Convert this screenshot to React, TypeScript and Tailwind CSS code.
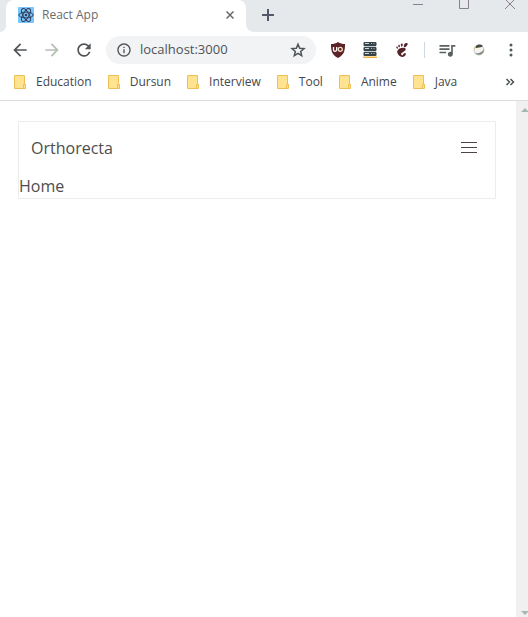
import type { ReactNode } from "react";
import { MdArrowBack, MdArrowForward, MdRefresh, MdInfoOutline, MdQueueMusic } from "react-icons/md";
import { SiGnome } from "react-icons/si";

const bookmarks = ["Education", "Dursun", "Interview", "Tool", "Anime", "Java"];

function IconButton({ label, children, className = "" }: { label: string; children: ReactNode; className?: string }) {
  return (
    <button type="button" aria-label={label} className={`flex shrink-0 items-center justify-center ${className}`}>
      {children}
    </button>
  );
}

function ReactFavicon() {
  return (
    <svg viewBox="0 0 16 16" className="size-4 shrink-0" aria-hidden="true">
      <rect width="16" height="16" rx="1" fill="#78c6fb" />
      <g fill="none" stroke="#34405c" strokeWidth="1">
        <ellipse cx="8" cy="8" rx="7.2" ry="2.9" />
        <ellipse cx="8" cy="8" rx="7.2" ry="2.9" transform="rotate(60 8 8)" />
        <ellipse cx="8" cy="8" rx="7.2" ry="2.9" transform="rotate(120 8 8)" />
      </g>
      <circle cx="8" cy="8" r="1.3" fill="#34405c" />
    </svg>
  );
}

function FolderIcon() {
  return (
    <svg viewBox="0 0 12 14" className="h-3.5 w-3 shrink-0" aria-hidden="true">
      <path d="M.5.5h10v9h1v4H.5z" fill="#ffe391" stroke="#edc057" />
      <path d="M9.5 13.5V9.5h2" fill="none" stroke="#edc057" />
    </svg>
  );
}

function ShieldIcon() {
  return (
    <svg viewBox="0 0 16 16" className="size-4" aria-hidden="true">
      <path d="M8 0c2 1.5 4.5 2 7 2 0 6.5-.5 10.5-7 14C1.5 12.5 1 8.500 1 2c2.500 0 5-.5 7-2z" fill="#5b2228" />
      <path d="M3.500 5v2.700a1.600 1.600 0 0 0 3.200 0V5" fill="none" stroke="#fff" strokeWidth="1.300" />
      <circle cx="10.300" cy="7.300" r="2" fill="none" stroke="#f7dfc0" strokeWidth="1.300" />
    </svg>
  );
}

function ServerIcon() {
  return (
    <svg viewBox="0 0 14 16" className="h-4 w-3.5" aria-hidden="true">
      <g fill="#39434b">
        <rect x="0.5" width="13" height="4" rx="1" />
        <rect x="0.5" y="5" width="13" height="4" rx="1" />
        <rect x="0.5" y="10" width="13" height="4" rx="1" />
      </g>
      <path d="M2 1.5h4M2 6.5h4M2 11.5h4" stroke="#c9dcd9" />
      <path d="M8 1.5h1M10.500 1.5h1M8 6.5h1M10.500 6.5h1M8 11.5h1M10.500 11.5h1" stroke="#9fb8c0" />
      <path d="M1 4.5h12M1 9.5h12" stroke="#c3cfce" />
      <path d="M0 15.5h14" stroke="#f2b14c" />
      <path d="M0 14.5h14" stroke="#fbdc9a" />
    </svg>
  );
}

function LeafIcon() {
  return (
    <svg viewBox="0 0 12 12" className="size-3" aria-hidden="true">
      <circle cx="6" cy="6" r="5" fill="#f3f3ef" stroke="#b9bfb8" strokeWidth="0.8" />
      <path d="M2.200 3A5 5 0 0 1 9.800 1.700C9.300 3.600 6.800 2.900 4.800 3.800 3.600 4.300 3 4.200 2.200 3z" fill="#454b45" />
      <path d="M2 8.900c3.500 1.100 7.500-.6 8.800-4.200.5 3.300-1.500 6-4.800 6-1.700 0-3.200-.6-4-1.800z" fill="#848c82" />
      <path d="M1.200 4.800 2.600 2.200" stroke="#e3ba4b" strokeWidth="1.200" />
    </svg>
  );
}

function TabStrip() {
  return (
    <header className="flex h-8 bg-[#e6e9ec]">
      <div className="flex w-1.5 bg-white">
        <div className="grow rounded-br-lg bg-[#e6e9ec]" />
      </div>
      <div className="flex w-60 items-center rounded-t-lg bg-white pr-2 pb-0.5 pl-3">
        <ReactFavicon />
        <span className="grow pl-2 text-xs text-[#6b6b6b]">React App</span>
        <IconButton label="Close tab" className="size-4">
          <svg viewBox="0 0 8 8" className="size-2" fill="none" stroke="#66696d" strokeWidth="1.5">
            <path d="M.5.5l7 7M7.500.5l-7 7" />
          </svg>
        </IconButton>
      </div>
      <div className="flex grow bg-white">
        <div className="flex grow items-start justify-between rounded-bl-lg bg-[#e6e9ec] pl-3">
          <IconButton label="New tab" className="mt-[5px] size-5">
            <svg viewBox="0 0 12 12" className="size-3" fill="none" stroke="#55586a" strokeWidth="2">
              <path d="M0 6h12M6 0v12" />
            </svg>
          </IconButton>
          <div className="flex gap-9 pr-[13px] text-[#8a7f8c]">
            <IconButton label="Minimize" className="size-2.5">
              <svg viewBox="0 0 10 10" className="size-2.5" fill="none" stroke="currentColor">
                <path d="M0 4.5h10" />
              </svg>
            </IconButton>
            <IconButton label="Maximize" className="size-2.5">
              <svg viewBox="0 0 10 10" className="size-2.5" fill="none" stroke="currentColor">
                <path d="M.5-1v9.500h9V-1" />
              </svg>
            </IconButton>
            <IconButton label="Close" className="size-2.5">
              <svg viewBox="0 0 10 10" className="size-2.5" fill="none" stroke="currentColor">
                <path d="M0-1l10 10M10-1L0 9" />
              </svg>
            </IconButton>
          </div>
        </div>
      </div>
    </header>
  );
}

function Toolbar() {
  return (
    <div className="flex h-9 items-center pr-[7px] pl-2.5">
      <div className="flex gap-3 text-[#505457]">
        <IconButton label="Back" className="size-5">
          <MdArrowBack className="size-5" />
        </IconButton>
        <IconButton label="Forward" className="size-5">
          <MdArrowForward className="size-5 text-[#b4beb2]" />
        </IconButton>
        <IconButton label="Reload" className="size-5">
          <MdRefresh className="size-5" />
        </IconButton>
      </div>
      <div className="ml-3 flex h-7 min-w-0 grow items-center rounded-full bg-[#f1f3f4] px-2.5 text-[#505457]">
        <MdInfoOutline className="size-4 shrink-0" />
        <input
          aria-label="Address"
          defaultValue="localhost:3000"
          className="ml-2 w-0 min-w-0 grow bg-transparent text-[13px] text-[#4f5256] outline-none"
        />
        <IconButton label="Bookmark this page" className="size-4">
          <svg viewBox="0 0 16 16" className="size-4" fill="none" stroke="currentColor" strokeWidth="1.5">
            <path d="M8 2.200l1.700 4 4.300.4-3.300 2.800 1 4.200L8 11.400l-3.700 2.200 1-4.200L2 6.600l4.300-.4z" />
          </svg>
        </IconButton>
      </div>
      <div className="ml-3 flex shrink-0 items-center gap-3">
        <IconButton label="Content blocker" className="size-5">
          <ShieldIcon />
        </IconButton>
        <IconButton label="Server extension" className="size-5">
          <ServerIcon />
        </IconButton>
        <IconButton label="Gnome extension" className="size-5">
          <SiGnome className="size-3.5 text-[#54242a]" />
        </IconButton>
        <span className="h-4 w-px bg-[#cfd8df]" />
        <IconButton label="Playlist" className="size-5">
          <MdQueueMusic className="size-5 text-[#59625f]" />
        </IconButton>
        <IconButton label="Profile" className="size-5">
          <LeafIcon />
        </IconButton>
        <IconButton label="Menu" className="size-5">
          <svg viewBox="0 0 4 14" className="h-3.5 w-1" fill="#4f5b59">
            <circle cx="2" cy="2" r="1.5" />
            <circle cx="2" cy="7" r="1.5" />
            <circle cx="2" cy="12" r="1.5" />
          </svg>
        </IconButton>
      </div>
    </div>
  );
}

function BookmarksBar() {
  return (
    <nav className="flex h-[33px] items-center justify-between border-b border-[#dadce0] pr-[13px] pb-1 pl-3.5 text-xs text-[#44474b]">
      <ul className="flex gap-4">
        {bookmarks.map((name) => (
          <li key={name}>
            <a href="#" className="flex items-center gap-2.5">
              <FolderIcon />
              {name}
            </a>
          </li>
        ))}
      </ul>
      <IconButton label="More bookmarks">
        <svg viewBox="0 0 10 8" className="h-2 w-2.5" fill="none" stroke="#4a5254" strokeWidth="1.5">
          <path d="M1.500 1l3 3-3 3M5.500 1l3 3-3 3" />
        </svg>
      </IconButton>
    </nav>
  );
}

function Scrollbar() {
  return (
    <div className="flex w-3 flex-col justify-between overflow-hidden bg-[#f0f0f0] pt-[7px] pb-0.5 pl-[5px]" aria-hidden="true">
      <svg viewBox="0 0 8 4" className="h-1 w-2 shrink-0" fill="#a3bab3">
        <path d="M0 4l4-4 4 4z" />
      </svg>
      <svg viewBox="0 0 8 4" className="h-1 w-2 shrink-0" fill="#a3bab3">
        <path d="M0 0l4 4 4-4z" />
      </svg>
    </div>
  );
}

export default function App() {
  return (
    <div className="flex min-h-screen flex-col bg-white font-['Open_Sans','Noto_Sans',sans-serif]">
      <TabStrip />
      <Toolbar />
      <BookmarksBar />
      <div className="flex grow">
        <main className="grow pt-5 pr-5 pl-[18px]">
          <nav className="border border-[#ececec] text-base text-[#4d4d4d]">
            <div className="flex h-[52px] items-center justify-between pr-[18px] pl-3">
              <a href="#">Orthorecta</a>
              <button type="button" aria-label="Toggle navigation" className="flex h-3 w-4 flex-col gap-1">
                <span className="h-px w-full bg-[#4d4449]" />
                <span className="h-px w-full bg-[#4d4449]" />
                <span className="h-px w-full bg-[#4d4449]" />
              </button>
            </div>
            <a href="#" className="block">Home</a>
          </nav>
        </main>
        <Scrollbar />
      </div>
    </div>
  );
}
